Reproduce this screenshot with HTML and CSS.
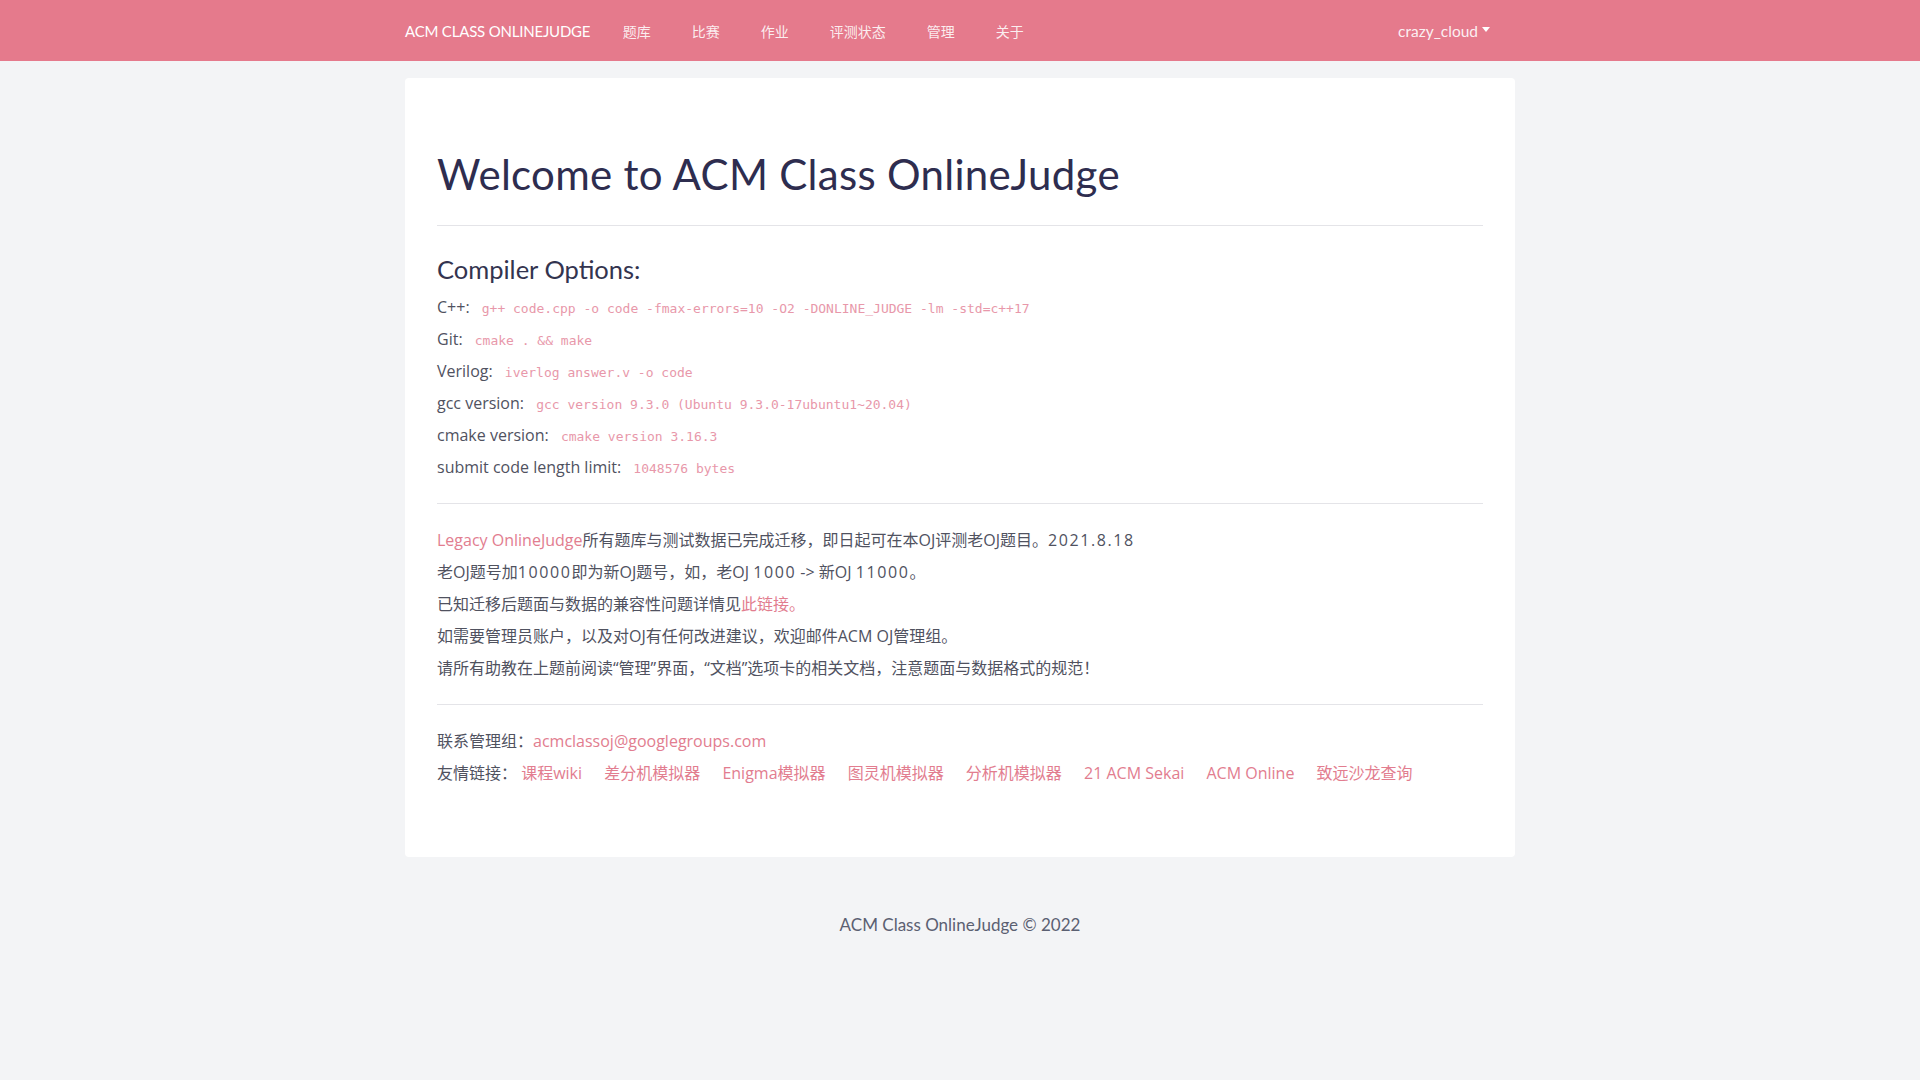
FILE: index.html
```html
<!DOCTYPE html>
<html lang="zh">
<head>
<meta charset="utf-8">
<title>ACM Class OnlineJudge</title>
<link rel="stylesheet" href="styles.css">
</head>
<body>
<nav class="navbar">
  <div class="nav-inner">
    <a class="brand" href="#">ACM CLASS ONLINEJUDGE</a>
    <ul class="nav-links">
      <li><a href="#">题库</a></li>
      <li><a href="#">比赛</a></li>
      <li><a href="#">作业</a></li>
      <li><a href="#">评测状态</a></li>
      <li><a href="#">管理</a></li>
      <li><a href="#">关于</a></li>
    </ul>
    <a class="user" href="#">crazy_cloud<span class="caret"></span></a>
  </div>
</nav>

<main class="container">
  <section class="card">
    <h1 class="title">Welcome to ACM Class OnlineJudge</h1>
    <hr class="title-rule">
    <h2 class="subtitle">Compiler Options:</h2>
    <div class="line">C++: <code>g++ code.cpp -o code -fmax-errors=10 -O2 -DONLINE_JUDGE -lm -std=c++17</code></div>
    <div class="line">Git: <code>cmake . &amp;&amp; make</code></div>
    <div class="line">Verilog: <code>iverlog answer.v -o code</code></div>
    <div class="line">gcc version: <code>gcc version 9.3.0 (Ubuntu 9.3.0-17ubuntu1~20.04)</code></div>
    <div class="line">cmake version: <code>cmake version 3.16.3</code></div>
    <div class="line">submit code length limit: <code>1048576 bytes</code></div>
    <hr>
    <div class="line"><a href="#">Legacy OnlineJudge</a>所有题库与测试数据已完成迁移，即日起可在本OJ评测老OJ题目。<span class="num">2021.8.18</span></div>
    <div class="line">老OJ题号加<span class="num">10000</span>即为新OJ题号，如，老OJ <span class="num">1000</span> -&gt; 新OJ <span class="num">11000</span>。</div>
    <div class="line">已知迁移后题面与数据的兼容性问题详情见<a href="#">此链接。</a></div>
    <div class="line">如需要管理员账户，以及对OJ有任何改进建议，欢迎邮件ACM OJ管理组。</div>
    <div class="line">请所有助教在上题前阅读“管理”界面，“文档”选项卡的相关文档，注意题面与数据格式的规范！</div>
    <hr>
    <div class="line">联系管理组：<a href="#">acmclassoj@googlegroups.com</a></div>
    <div class="line friends">友情链接：
      <a href="#">课程wiki</a>
      <a href="#">差分机模拟器</a>
      <a href="#">Enigma模拟器</a>
      <a href="#">图灵机模拟器</a>
      <a href="#">分析机模拟器</a>
      <a href="#">21 ACM Sekai</a>
      <a href="#">ACM Online</a>
      <a href="#">致远沙龙查询</a>
    </div>
  </section>
</main>

<footer class="footer">ACM Class OnlineJudge © 2022</footer>
</body>
</html>
```

FILE: styles.css
```css
* { box-sizing: border-box; }

html, body {
  margin: 0;
  padding: 0;
}

body {
  background: #f3f4f6;
  font-family: Lato, "Noto Sans CJK SC", sans-serif;
  font-size: 16px;
  color: #4f5160;
  min-height: 1080px;
}

a { text-decoration: none; color: #e27d8f; }

.navbar {
  background: #e57a8c;
  height: 61px;
}

.nav-inner {
  width: 1110px;
  margin: 0 auto;
  height: 100%;
  display: flex;
  align-items: center;
}

.brand {
  color: #ffffff;
  font-size: 15px;
  margin-right: 12px;
  letter-spacing: -0.2px;
}

.nav-links {
  list-style: none;
  display: flex;
  margin: 0;
  padding: 0;
  flex: 1;
}

.nav-links a {
  display: block;
  padding: 0 20.5px;
  color: rgba(255, 255, 255, 0.88);
  font-size: 14px;
}

.user {
  color: rgba(255, 255, 255, 0.9);
  font-size: 15.5px;
  margin-right: 25px;
  display: flex;
  align-items: center;
}

.caret {
  display: inline-block;
  margin-left: 4px;
  border-top: 5px solid #fff;
  border-left: 4px solid transparent;
  border-right: 4px solid transparent;
  margin-top: -2px;
}

.container {
  width: 1110px;
  margin: 17px auto 0;
}

.card {
  background: #ffffff;
  border-radius: 4px;
  padding: 72px 32px 68px;
}

.title {
  margin: 0 0 27px;
  font-size: 42px;
  font-weight: 400;
  line-height: 48px;
  color: #2e2d4f;
  letter-spacing: 0.3px;
}

hr {
  border: 0;
  border-top: 1px solid #e4e4e8;
  margin: 20px 0;
}

hr.title-rule {
  margin-bottom: 29px;
}

.subtitle {
  margin: 0 0 7px;
  font-size: 25.5px;
  font-weight: 400;
  line-height: 29px;
  color: #33344f;
}

.line {
  line-height: 32px;
  height: 32px;
  font-family: "Open Sans", "Noto Sans CJK SC", sans-serif;
  font-size: 16px;
  color: #50525f;
  white-space: nowrap;
}

.num {
  letter-spacing: 1.6px;
}

code {
  font-family: "DejaVu Sans Mono", "Liberation Mono", monospace;
  font-size: 13px;
  color: #e898aa;
  margin-left: 8px;
}

.friends a {
  margin-right: 18px;
}

.footer {
  text-align: center;
  margin-top: 56px;
  font-size: 17px;
  color: #5b6072;
  line-height: 24px;
}
```
